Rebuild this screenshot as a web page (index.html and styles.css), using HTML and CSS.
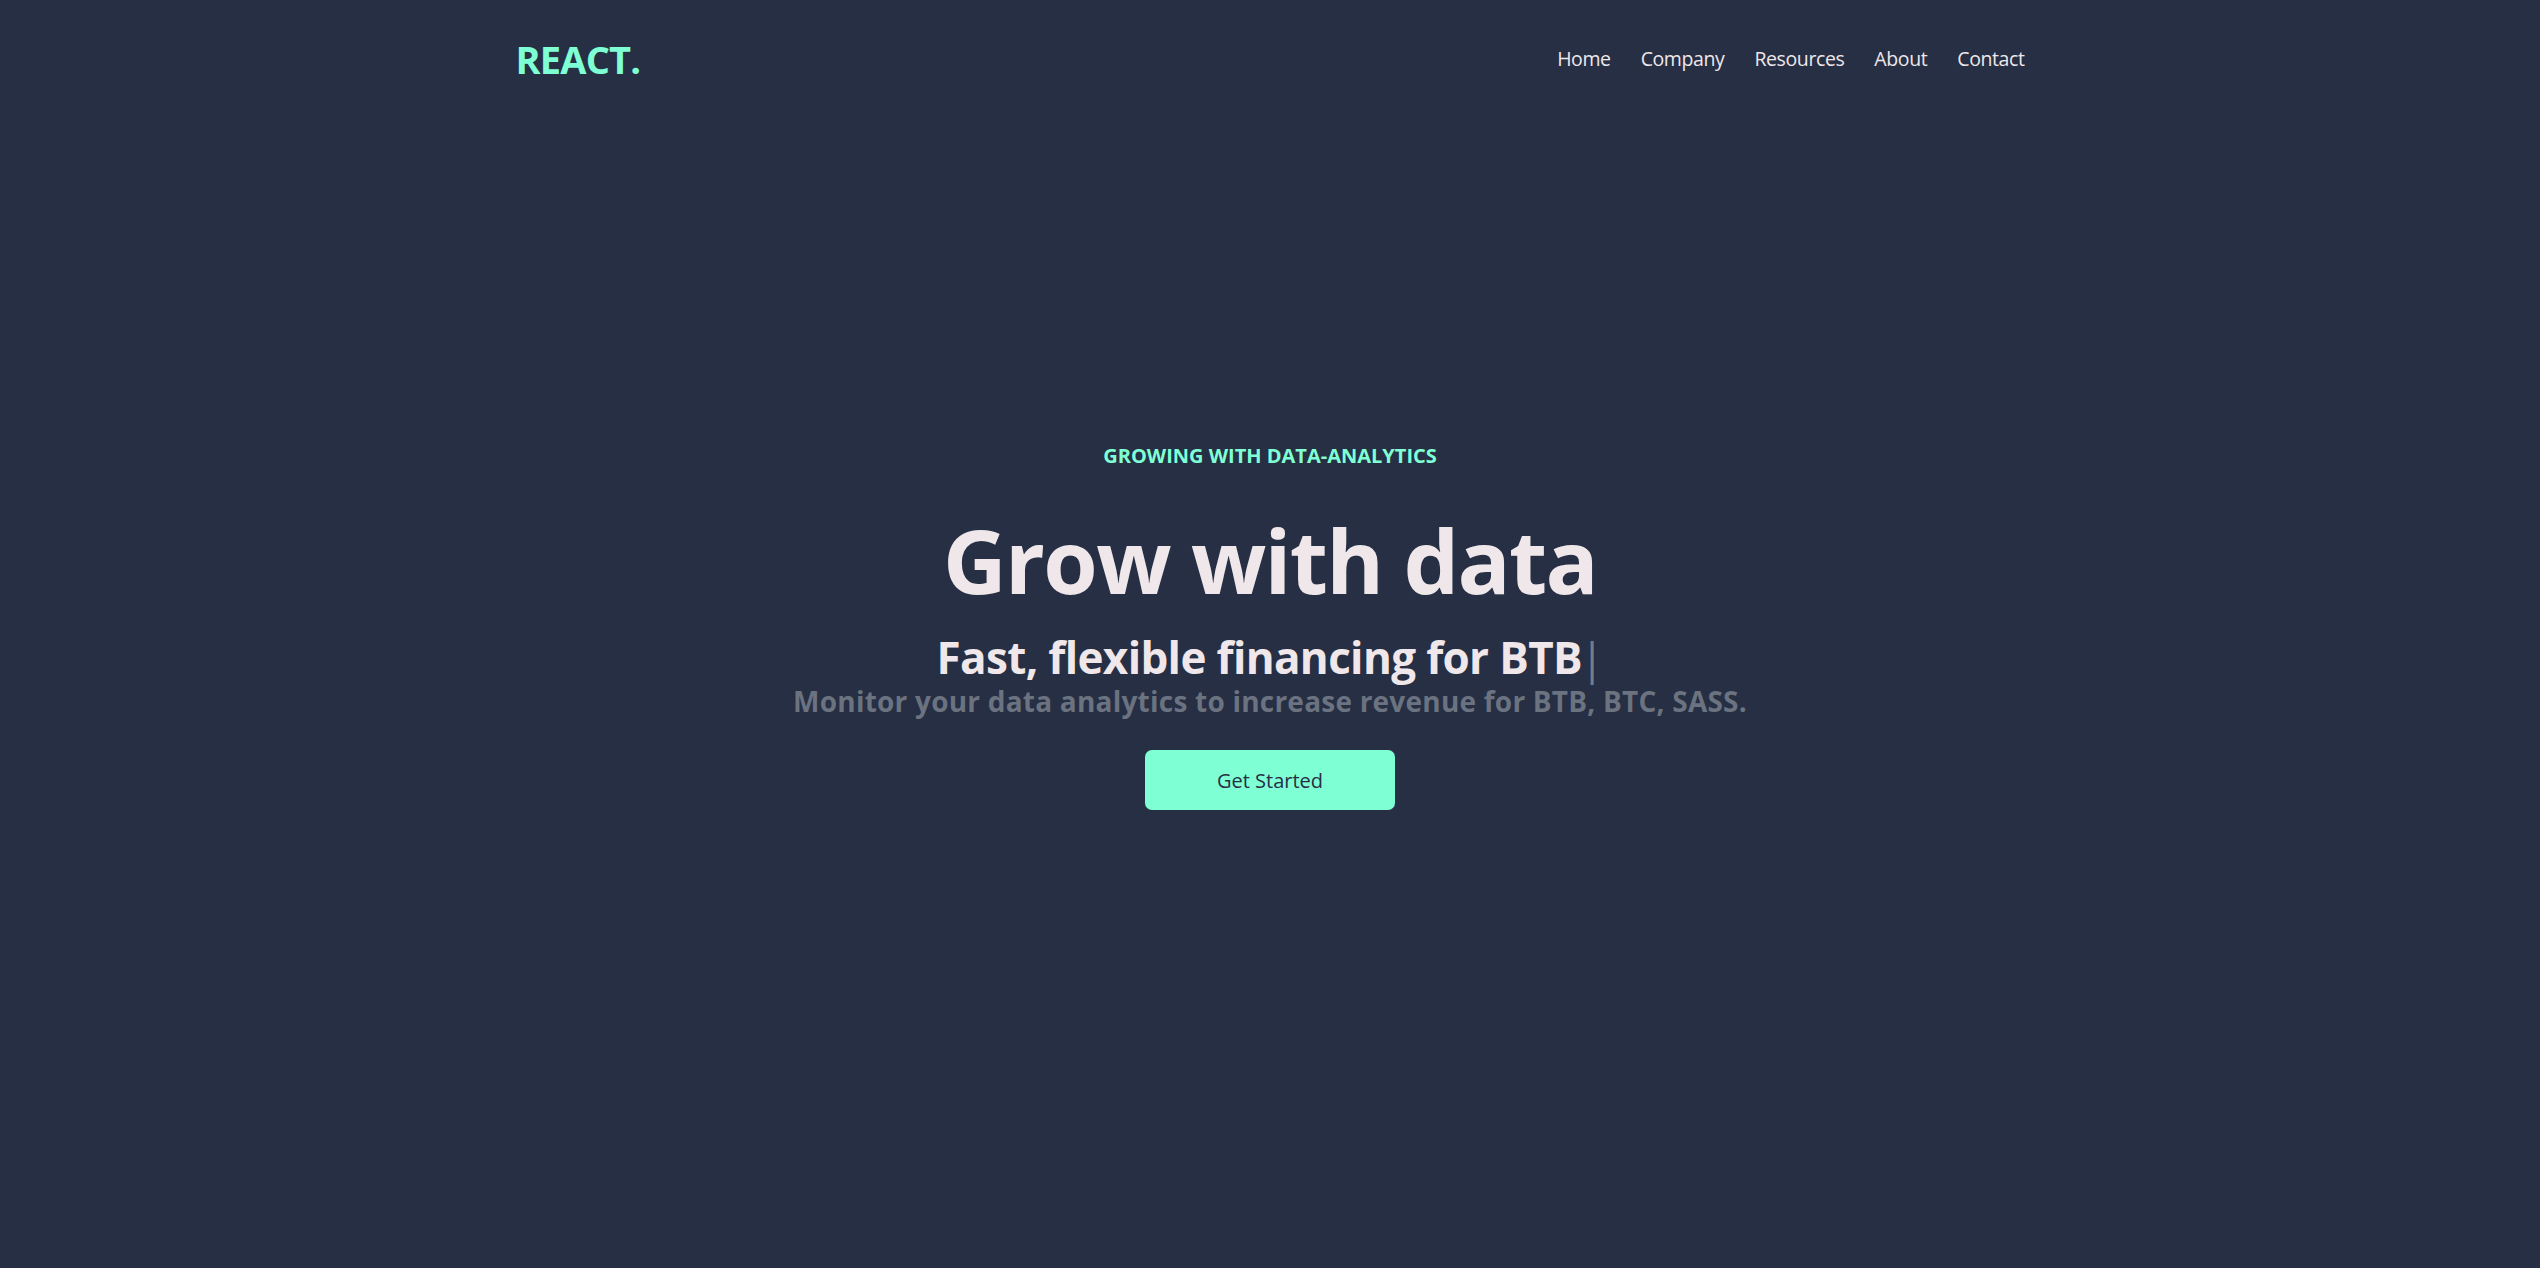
FILE: index.html
```html
<!DOCTYPE html>
<html lang="en">
<head>
<meta charset="utf-8">
<title>REACT.</title>
<link rel="stylesheet" href="styles.css">
</head>
<body>
<header class="navbar">
  <h1 class="logo">REACT.</h1>
  <ul class="nav-links">
    <li>Home</li>
    <li>Company</li>
    <li>Resources</li>
    <li>About</li>
    <li>Contact</li>
  </ul>
</header>
<main class="hero">
  <p class="eyebrow">GROWING WITH DATA-ANALYTICS</p>
  <h2 class="title">Grow with data</h2>
  <div class="typed-row">
    <p class="subtitle">Fast, flexible financing for BTB<span class="cursor">|</span></p>
  </div>
  <p class="lead">Monitor your data analytics to increase revenue for BTB, BTC, SASS.</p>
  <button class="cta">Get Started</button>
</main>
</body>
</html>
```

FILE: styles.css
```css
* { box-sizing: border-box; }
html, body {
  margin: 0;
  padding: 0;
  background: #262f43;
  color: #efe7ea;
  font-family: "Open Sans", "Noto Sans", sans-serif;
  height: 100%;
}
.navbar {
  width: 1509px;
  height: 120px;
  padding-bottom: 3px;
  margin: 0 auto;
  display: flex;
  justify-content: space-between;
  align-items: center;
}
.logo {
  margin: 0;
  font-size: 38px;
  line-height: 46px;
  font-weight: 700;
  color: #7fffd4;
  letter-spacing: -0.8px;
}
.nav-links {
  list-style: none;
  margin: 0;
  padding: 0;
  display: flex;
  gap: 30px;
  font-size: 19.5px;
  line-height: 30px;
  letter-spacing: -0.4px;
}
.hero {
  display: flex;
  flex-direction: column;
  align-items: center;
  text-align: center;
  padding-top: 321px;
}
.eyebrow {
  margin: 0;
  font-size: 20px;
  line-height: 30px;
  font-weight: 700;
  color: #7fffd4;
}
.title {
  margin: 43px 0 0;
  font-size: 88px;
  line-height: 92px;
  font-weight: 700;
  letter-spacing: -1.7px;
}
.typed-row {
  display: flex;
  justify-content: center;
  margin-top: 26px;
}
.subtitle {
  margin: 0;
  font-size: 44px;
  line-height: 50px;
  font-weight: 700;
  letter-spacing: -0.65px;
}
.cursor {
  color: #757b88;
  font-weight: 400;
  margin-left: -2px;
}
.lead {
  margin: 1px 0 0;
  font-size: 28px;
  line-height: 36px;
  font-weight: 700;
  color: #6b7280;
  letter-spacing: 0.22px;
}
.cta {
  margin-top: 31px;
  width: 250px;
  height: 60px;
  border: none;
  border-radius: 7px;
  background: #7fffd4;
  color: #272f45;
  font-family: "Open Sans", "Noto Sans", sans-serif;
  font-size: 20px;
  font-weight: 500;
}
```
